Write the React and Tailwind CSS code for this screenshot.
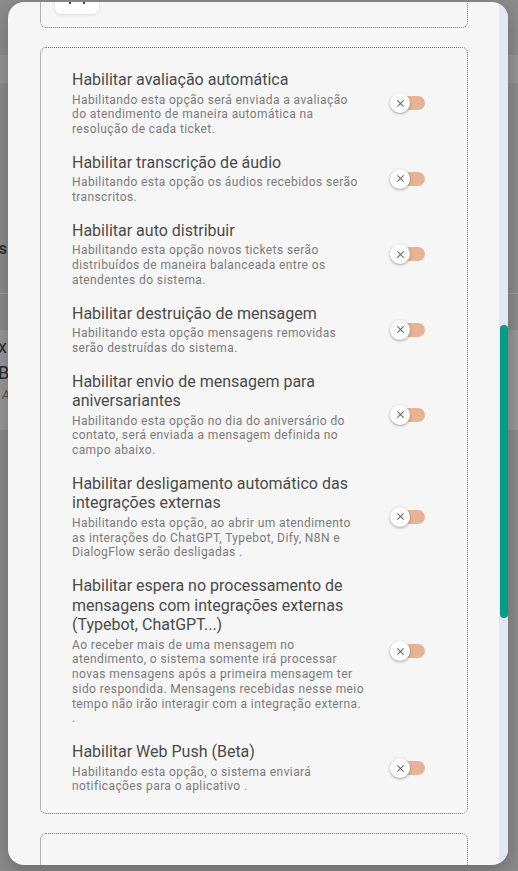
import React from "react";

const rows = [
  {
    title: "Habilitar avaliação automática",
    desc: "Habilitando esta opção será enviada a avaliação do atendimento de maneira automática na resolução de cada ticket.",
  },
  {
    title: "Habilitar transcrição de áudio",
    desc: "Habilitando esta opção os áudios recebidos serão transcritos.",
  },
  {
    title: "Habilitar auto distribuir",
    desc: "Habilitando esta opção novos tickets serão distribuídos de maneira balanceada entre os atendentes do sistema.",
  },
  {
    title: "Habilitar destruição de mensagem",
    desc: "Habilitando esta opção mensagens removidas serão destruídas do sistema.",
  },
  {
    title: "Habilitar envio de mensagem para aniversariantes",
    desc: "Habilitando esta opção no dia do aniversário do contato, será enviada a mensagem definida no campo abaixo.",
  },
  {
    title: "Habilitar desligamento automático das integrações externas",
    desc: "Habilitando esta opção, ao abrir um atendimento as interações do ChatGPT, Typebot, Dify, N8N e DialogFlow serão desligadas .",
  },
  {
    title: "Habilitar espera no processamento de mensagens com integrações externas (Typebot, ChatGPT...)",
    desc: "Ao receber mais de uma mensagem no atendimento, o sistema somente irá processar novas mensagens após a primeira mensagem ter sido respondida. Mensagens recebidas nesse meio tempo não irão interagir com a integração externa.",
    extra: true,
  },
  {
    title: "Habilitar Web Push (Beta)",
    desc: "Habilitando esta opção, o sistema enviará notificações para o aplicativo .",
  },
];

// switch desligado, trilho pêssego
function Toggle() {
  return (
    <div className="flex items-center">
      <div className="relative z-10 w-5 h-5 rounded-full bg-white shadow-[0_1px_3px_rgba(0,0,0,0.35)] flex items-center justify-center">
        <svg width="9" height="9" viewBox="0 0 10 10" fill="none" stroke="#6f6f6f" strokeWidth="1.3">
          <path d="M1.5 1.5l7 7M8.5 1.5l-7 7" />
        </svg>
      </div>
      <div className="-ml-[18px] w-[33px] h-[14px] rounded-full bg-[#e6b495]" />
    </div>
  );
}

function Row({ title, desc, extra }) {
  return (
    <div className="flex items-center">
      <div className="w-[293px]">
        <div className="text-[16px] leading-[19.5px] text-[#4a4a4a]">{title}</div>
        <div className="mt-[3px] text-[12px] leading-[14.75px] tracking-[0.4px] text-[#7a7a7a]">
          {desc}
          {extra && (
            <>
              <br />.
            </>
          )}
        </div>
      </div>
      <div className="ml-[25px]">
        <Toggle />
      </div>
    </div>
  );
}

export default function App() {
  return (
    <div
      className="relative w-[518px] h-[871px] overflow-hidden bg-[#8c8c8c]"
      style={{ fontFamily: "Roboto, 'Noto Sans', sans-serif" }}
    >
      {/* página de fundo escurecida */}
      <div className="flex flex-col">
        <div className="h-[55px]" />
        <div className="h-[28px] bg-[#959595]" />
        <div className="h-[210px] flex flex-col">
          <div className="mt-[154px] -ml-[47px] text-[16px] font-medium text-[#2b2b2b]">Tarefas</div>
        </div>
        <div className="h-px bg-[#9e9e9e]" />
        <div className="h-[36px]" />
        <div className="h-[100px] bg-[#989898] flex flex-col text-[#2a2a2a]">
          <div className="mt-[4px] -ml-[2px] text-[18px] leading-[26px]">x</div>
          <div className="-ml-[2px] text-[18px] leading-[26px]">B</div>
          <div className="ml-[2px] text-[12px] italic text-[#555]">A</div>
        </div>
      </div>

      {/* modal */}
      <div className="absolute left-[8px] top-[2px] w-[500px] h-[863px] rounded-[16px] bg-[#f6f6f6] overflow-hidden flex shadow-[0_6px_20px_rgba(0,0,0,0.25)]">
        <div className="flex-1 overflow-hidden">
          <div className="-mt-[54px] pl-[32px] pr-[31px] flex flex-col gap-[19px]">
            {/* card anterior (cortado) */}
            <div className="h-[80px] rounded-[6px] border border-dotted border-[#6f6f6f] relative">
              <div className="absolute left-[14px] top-[38px] w-[44px] h-[27px] rounded-[6px] bg-white shadow-[0_1px_3px_rgba(0,0,0,0.12)] flex items-end justify-center gap-[12px] pb-[10px]">
                <span className="w-[2px] h-[2px] bg-[#444]" />
                <span className="w-[2px] h-[2px] bg-[#444]" />
              </div>
            </div>

            {/* configurações */}
            <div className="rounded-[6px] border border-dotted border-[#6f6f6f] pl-[31px] pt-[22px] pb-[19px] flex flex-col gap-[16px]">
              {rows.map((r) => (
                <Row key={r.title} {...r} />
              ))}
            </div>

            {/* próximo card */}
            <div className="h-[80px] rounded-[6px] border border-dotted border-[#6f6f6f]" />
          </div>
        </div>
        {/* barra de rolagem */}
        <div className="w-[9px] bg-[#e3e6f4] flex flex-col">
          <div className="mt-[323px] mx-[0.5px] h-[293px] rounded-full bg-[#009e86]" />
        </div>
      </div>
    </div>
  );
}
